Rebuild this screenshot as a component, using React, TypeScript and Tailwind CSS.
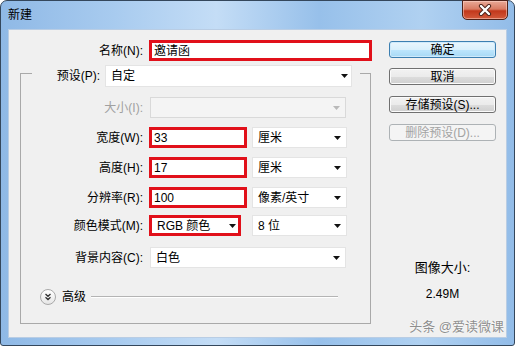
import React from 'react';

const font = 'font-["Liberation_Sans","Noto_Sans_CJK_SC",sans-serif]';

const Caret = ({ muted }: { muted?: boolean }) => (
  <svg width="7" height="4" viewBox="0 0 7 4" className="shrink-0">
    <path d="M0 0h7L3.5 4z" fill={muted ? '#b9b9b9' : '#111'} />
  </svg>
);

const Select = ({ value, className = '' }: { value: string; className?: string }) => (
  <div
    className={`flex h-[21px] items-center justify-between border border-[#e4e4e4] bg-white pl-[5px] pr-[5px] ${className}`}
  >
    <span>{value}</span>
    <Caret />
  </div>
);

const RedBox = ({ value, className = '', caret }: { value: string; className?: string; caret?: boolean }) => (
  <div
    className={`flex h-[21px] items-center justify-between border-[3px] border-[#e1101a] bg-white pl-[2px] pr-[2px] ${className}`}
  >
    <span className={caret ? 'pl-[3px]' : ''}>{value}</span>
    {caret && <Caret />}
  </div>
);

const Btn = ({ children, kind }: { children: React.ReactNode; kind?: 'default' | 'disabled' }) => {
  if (kind === 'default')
    return (
      <div className="flex h-[17px] w-[107px] items-center justify-center rounded-[3px] border border-[#3c7fb1] bg-[linear-gradient(180deg,#eaf6fd_0%,#d9f0fc_50%,#bee6fd_51%,#a7d9f5_100%)] shadow-[inset_0_0_0_1px_#cfeafb]">
        {children}
      </div>
    );
  if (kind === 'disabled')
    return (
      <div className="flex h-[17px] w-[107px] items-center justify-center rounded-[3px] border border-[#adb2b5] bg-[#f4f4f4] text-[#a3a3a3]">
        {children}
      </div>
    );
  return (
    <div className="flex h-[17px] w-[107px] items-center justify-center rounded-[3px] border border-[#707070] bg-[linear-gradient(180deg,#f2f2f2_0%,#ebebeb_50%,#dddddd_51%,#cfcfcf_100%)] shadow-[inset_0_0_0_1px_#fbfbfb]">
      {children}
    </div>
  );
};

const Label = ({ text, w, muted }: { text: string; w: string; muted?: boolean }) => (
  <div className={`${w} shrink-0 text-right ${muted ? 'text-[#a0a0a0]' : ''}`}>{text}</div>
);

export default function App() {
  return (
    <div className={`h-[346px] w-[515px] bg-white text-[12px] leading-[16px] text-black ${font}`}>
      <div className="flex h-full w-full flex-col rounded-t-[7px] rounded-b-[3px] border border-[#34475c] bg-[linear-gradient(90deg,#8fb9e6_0%,#a8cbef_22%,#c4ddf6_42%,#97c0ea_62%,#b0d1f1_82%,#92bce8_100%)] px-[7px] pb-[7px]">
        {/* title bar */}
        <div className="flex h-[28px] items-start justify-between">
          <span className="pt-[6px] text-[12px] text-black">新建</span>
          <div className="-mr-[1px] -mt-[1px] flex h-[20px] w-[46px] items-center justify-center rounded-b-[5px] border border-[#4f2219] bg-[linear-gradient(180deg,#e9a997_0%,#d97b63_45%,#c2381c_55%,#d25a3c_100%)] shadow-[inset_0_0_0_1px_rgba(255,220,210,0.5)]">
            <svg width="14" height="12" viewBox="0 0 14 12">
              <path d="M3 2l8 8M11 2l-8 8" stroke="#4a2018" strokeWidth="4.2" strokeLinecap="round" />
              <path d="M3 2l8 8M11 2l-8 8" stroke="#fff" strokeWidth="2.4" strokeLinecap="round" />
            </svg>
          </div>
        </div>

        {/* client area */}
        <div className="relative flex flex-1 border border-[#b9cde4] bg-[#f0f0f0]">
          {/* left column */}
          <div className="flex w-[364px] flex-col">
            <div className="mt-[10px] flex h-[21px] items-center">
              <Label text="名称(N):" w="w-[134px]" />
              <RedBox value="邀请函" className="ml-[6px] w-[223px]" />
            </div>

            <div className="ml-[11px] mt-[12px] flex h-[251px] w-[351px] flex-col border border-[#a9a9a9]">
              {/* preset row sits on the top border */}
              <div className="-mt-[9px] ml-[11px] flex h-[22px] w-[328px] items-center bg-[#f0f0f0]">
                <Label text="预设(P):" w="w-[68px]" />
                <div className="ml-[5px] flex h-[22px] w-[247px] items-center justify-between border border-[#e4e4e4] bg-white pl-[5px] pr-[3px]">
                  <span>自定</span>
                  <Caret />
                </div>
              </div>

              <div className="mt-[10px] flex h-[21px] items-center">
                <Label text="大小(I):" w="w-[122px]" muted />
                <div className="ml-[7px] flex h-[21px] w-[196px] items-center justify-end border border-[#d9d9d9] bg-[#f4f4f4] pr-[5px]">
                  <Caret muted />
                </div>
              </div>

              <div className="mt-[9px] flex h-[21px] items-center">
                <Label text="宽度(W):" w="w-[122px]" />
                <RedBox value="33" className="ml-[6px] w-[98px]" />
                <Select value="厘米" className="ml-[5px] w-[95px]" />
              </div>

              <div className="mt-[9px] flex h-[21px] items-center">
                <Label text="高度(H):" w="w-[122px]" />
                <RedBox value="17" className="ml-[6px] w-[98px]" />
                <Select value="厘米" className="ml-[5px] w-[95px]" />
              </div>

              <div className="mt-[9px] flex h-[21px] items-center">
                <Label text="分辨率(R):" w="w-[122px]" />
                <RedBox value="100" className="ml-[6px] w-[98px]" />
                <Select value="像素/英寸" className="ml-[5px] w-[95px]" />
              </div>

              <div className="mt-[7px] flex h-[21px] items-center">
                <Label text="颜色模式(M):" w="w-[122px]" />
                <RedBox value="RGB 颜色" caret className="ml-[6px] w-[92px]" />
                <Select value="8 位" className="ml-[11px] w-[95px]" />
              </div>

              <div className="mt-[11px] flex h-[21px] items-center">
                <Label text="背景内容(C):" w="w-[122px]" />
                <Select value="白色" className="ml-[7px] w-[196px]" />
              </div>

              <div className="mt-[21px] flex h-[16px] items-center">
                <div className="ml-[19px] flex h-[16px] w-[16px] shrink-0 items-center justify-center rounded-full border border-[#a9a9a9] bg-[linear-gradient(180deg,#ffffff,#e6e6e6)]">
                  <svg width="8" height="8" viewBox="0 0 8 8">
                    <path d="M1.5 1l2.5 2.3L6.5 1M1.5 4.2l2.5 2.3 2.5-2.3" fill="none" stroke="#333" strokeWidth="1.3" />
                  </svg>
                </div>
                <span className="ml-[6px]">高级</span>
                <div className="ml-[5px] mr-[32px] h-[2px] flex-1 border-t border-b border-t-[#b4b4b4] border-b-white" />
              </div>
            </div>
          </div>

          {/* right column */}
          <div className="ml-[16px] flex flex-col items-center">
            <div className="mt-[11px]">
              <Btn kind="default">确定</Btn>
            </div>
            <div className="mt-[10px]">
              <Btn>取消</Btn>
            </div>
            <div className="mt-[11px]">
              <Btn>存储预设(S)...</Btn>
            </div>
            <div className="mt-[11px]">
              <Btn kind="disabled">删除预设(D)...</Btn>
            </div>
            <div className="mt-[119px] text-[13px]">图像大小:</div>
            <div className="mt-[10px] text-[12px]">2.49M</div>
          </div>

          {/* watermark */}
          <div className="absolute bottom-[2px] right-[2px] text-[13px] leading-[16px] text-[#8e8e8e] [text-shadow:0_0_2px_#ffffff,0_0_1px_#ffffff]">
            头条 @爱读微课
          </div>
        </div>
      </div>
    </div>
  );
}
